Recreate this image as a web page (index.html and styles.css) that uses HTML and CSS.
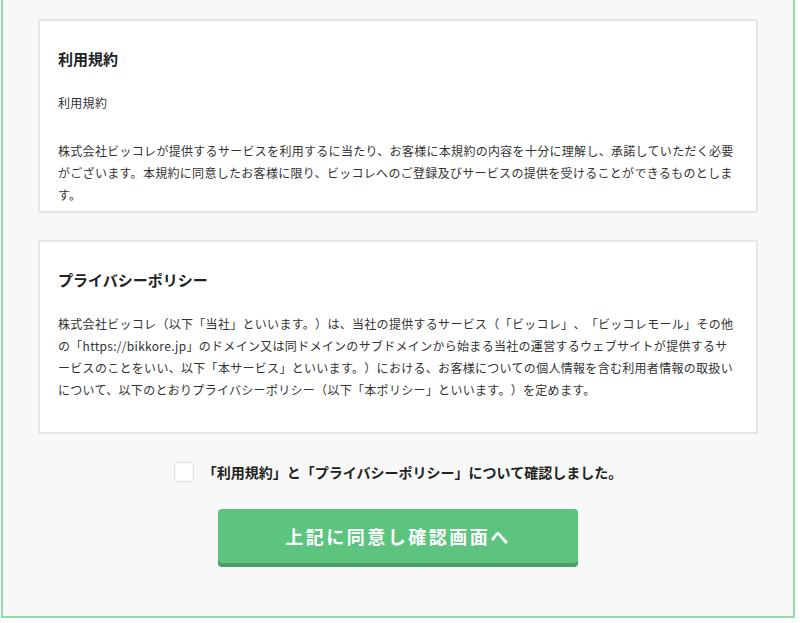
FILE: index.html
```html
<!DOCTYPE html>
<html lang="ja">
<head>
  <meta charset="UTF-8">
  <meta name="viewport" content="width=device-width, initial-scale=1.0">
  <title>規約への同意</title>
  <link rel="stylesheet" href="styles.css">
</head>
<body>
  <div class="entry">
    <section class="terms-box">
      <h2>利用規約</h2>
      <p class="lead">利用規約</p>
      <p>株式会社ビッコレが提供するサービスを利用するに当たり、お客様に本規約の内容を十分に理解し、承諾していただく必要がございます。本規約に同意したお客様に限り、ビッコレへのご登録及びサービスの提供を受けることができるものとします。</p>
    </section>
    <section class="terms-box">
      <h2>プライバシーポリシー</h2>
      <p>株式会社ビッコレ（以下「当社」といいます。）は、当社の提供するサービス（「ビッコレ」、「ビッコレモール」その他の「https://bikkore.jp」のドメイン又は同ドメインのサブドメインから始まる当社の運営するウェブサイトが提供するサービスのことをいい、以下「本サービス」といいます。）における、お客様についての個人情報を含む利用者情報の取扱いについて、以下のとおりプライバシーポリシー（以下「本ポリシー」といいます。）を定めます。</p>
    </section>
    <label class="agree">
      <input type="checkbox" name="agree">
      <span class="agree-box"></span>
      <span class="agree-text">「利用規約」と「プライバシーポリシー」について確認しました。</span>
    </label>
    <div class="submit-row">
      <button type="submit">上記に同意し確認画面へ</button>
    </div>
  </div>
</body>
</html>
```

FILE: styles.css
```css
body{margin:0;background:#fff;font-family:"Noto Sans CJK JP","Noto Sans",sans-serif;color:#333;text-spacing-trim:space-all;}
.entry{width:794px;margin-left:1px;background:#f8f8f8;border:2px solid #93dcaa;border-top:0;padding:19px 35px 53px 35px;box-sizing:border-box;}
.terms-box{height:194px;box-sizing:border-box;background:#fff;border:2px solid #e6e6e6;padding:27px 20px 0 18px;overflow:hidden;margin-bottom:27px;}
.terms-box h2{margin:0 0 22px;font-size:15px;line-height:22px;font-weight:bold;color:#222;}
.terms-box p{margin:0;font-size:12px;line-height:22px;letter-spacing:.025em;color:#333;}
.terms-box p.lead{margin-bottom:26px;}
.agree{display:flex;justify-content:center;align-items:center;gap:9px;margin-top:28px;cursor:pointer;}
.agree input{display:none;}
.agree-box{width:20px;height:20px;box-sizing:border-box;background:#fff;border:1px solid #ddd;border-radius:4px;}
.agree-text{font-size:14px;line-height:20px;font-weight:bold;color:#222;}
.submit-row{display:flex;justify-content:center;margin-top:27px;}
.submit-row button{width:360px;height:54px;border:0;border-radius:4px;background:#5cc47f;box-shadow:0 4px 0 #4b9e66;color:#fff;font-family:inherit;font-size:18px;font-weight:bold;letter-spacing:.14em;cursor:pointer;}
```
